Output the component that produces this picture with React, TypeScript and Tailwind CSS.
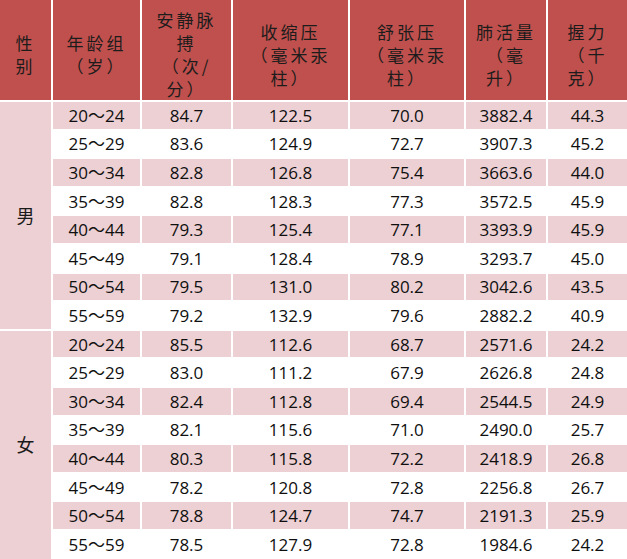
import React from "react"

// 年龄组数据: [年龄组, 安静脉搏, 收缩压, 舒张压, 肺活量, 握力]
const male = [
  ["20～24", "84.7", "122.5", "70.0", "3882.4", "44.3"],
  ["25～29", "83.6", "124.9", "72.7", "3907.3", "45.2"],
  ["30～34", "82.8", "126.8", "75.4", "3663.6", "44.0"],
  ["35～39", "82.8", "128.3", "77.3", "3572.5", "45.9"],
  ["40～44", "79.3", "125.4", "77.1", "3393.9", "45.9"],
  ["45～49", "79.1", "128.4", "78.9", "3293.7", "45.0"],
  ["50～54", "79.5", "131.0", "80.2", "3042.6", "43.5"],
  ["55～59", "79.2", "132.9", "79.6", "2882.2", "40.9"],
]

const female = [
  ["20～24", "85.5", "112.6", "68.7", "2571.6", "24.2"],
  ["25～29", "83.0", "111.2", "67.9", "2626.8", "24.8"],
  ["30～34", "82.4", "112.8", "69.4", "2544.5", "24.9"],
  ["35～39", "82.1", "115.6", "71.0", "2490.0", "25.7"],
  ["40～44", "80.3", "115.8", "72.2", "2418.9", "26.8"],
  ["45～49", "78.2", "120.8", "72.8", "2256.8", "26.7"],
  ["50～54", "78.8", "124.7", "74.7", "2191.3", "25.9"],
  ["55～59", "78.5", "127.9", "72.8", "1984.6", "24.2"],
]

const headers: string[][] = [
  ["性", "别"],
  ["年龄组", "（岁）"],
  ["安静脉", "搏", "（次/", "分）"],
  ["收缩压", "（毫米汞", "柱）"],
  ["舒张压", "（毫米汞", "柱）"],
  ["肺活量", "（毫", "升）"],
  ["握力", "（千", "克）"],
]

const widths = ["w-[52px]", "w-[89px]", "w-[91px]", "w-[117px]", "w-[116px]", "w-[82px]", "w-[80px]"]

function Group({ label, rows }: { label: string; rows: string[][] }) {
  return (
    <>
      {rows.map((r, i) => (
        <tr key={r[0]} className={i % 2 === 0 ? "h-[28.6px] bg-[#ecd0d3]" : "h-[28.6px] bg-white"}>
          {i === 0 && (
            <td
              rowSpan={rows.length}
              className="border-2 border-white bg-[#ecd0d3] text-center align-middle text-[18px] text-[#1a1a1a] [font-family:'Noto_Sans_CJK_SC',sans-serif]"
            >
              {label}
            </td>
          )}
          {r.map((v, j) => (
            <td key={j} className="border-2 border-white p-0 text-center align-middle leading-none">
              {v}
            </td>
          ))}
        </tr>
      ))}
    </>
  )
}

export default function App() {
  return (
    <div className="w-[627px] h-[559px] overflow-hidden bg-white">
      <table className="w-[627px] table-fixed border-collapse border-hidden text-[17px] text-[#0f0f0f] [font-family:'Open_Sans','Noto_Sans_CJK_SC',sans-serif]">
        <colgroup>
          {widths.map((w) => (
            <col key={w} className={w} />
          ))}
        </colgroup>
        <thead>
          <tr className="h-[100px] bg-[#c0504d]">
            {headers.map((lines, i) => (
              <th
                key={i}
                className="border-2 border-white px-0 pt-[8px] pb-0 text-center align-middle text-[17px] font-normal leading-[23px] tracking-[3px] text-[#1c1c1c] [font-family:'Noto_Sans_CJK_SC',sans-serif]"
              >
                {lines.map((l) => (
                  <div key={l} className="whitespace-nowrap">
                    {l}
                  </div>
                ))}
              </th>
            ))}
          </tr>
        </thead>
        <tbody>
          <Group label="男" rows={male} />
          <Group label="女" rows={female} />
        </tbody>
      </table>
    </div>
  )
}
